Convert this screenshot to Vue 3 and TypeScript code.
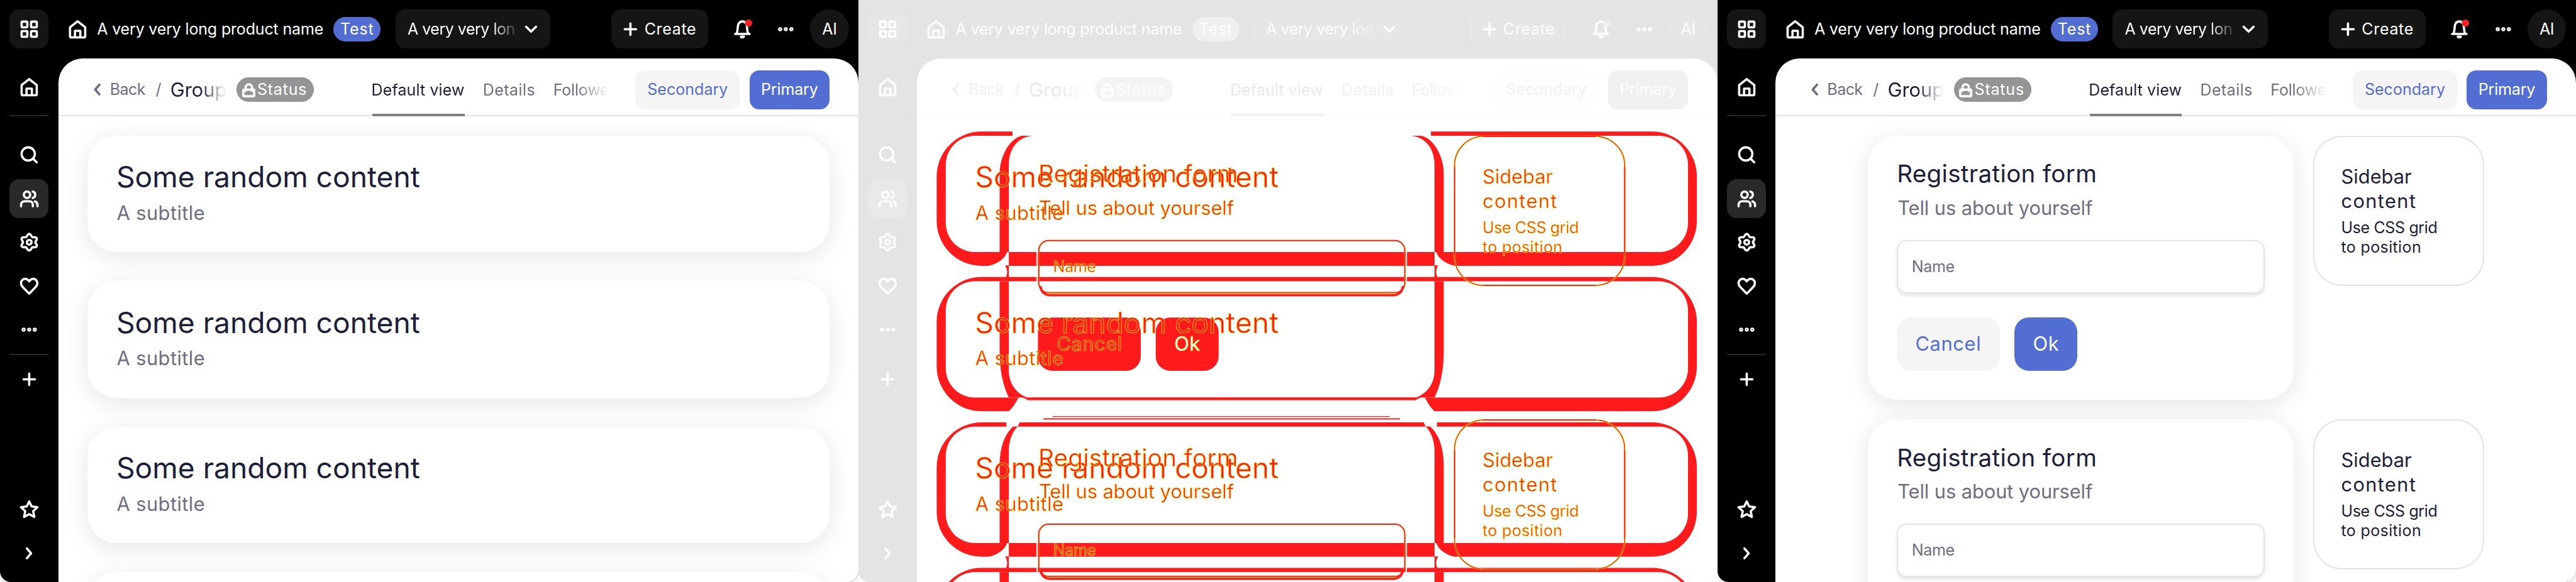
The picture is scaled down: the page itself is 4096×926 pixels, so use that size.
<script setup lang="ts">
type Layer = 'list' | 'form'
interface Panel { id: string; diff: boolean; layers: Layer[] }

const panels: Panel[] = [
  { id: 'before', diff: false, layers: ['list'] },
  { id: 'diff', diff: true, layers: ['list', 'form'] },
  { id: 'after', diff: false, layers: ['form'] },
]

const ring = (cx: number, cy: number, r: number) =>
  `M${cx - r} ${cy}a${r} ${r} 0 1 0 ${2 * r} 0a${r} ${r} 0 1 0 ${-2 * r} 0z`

const box = (x: number, y: number, w: number, h: number, r: number) =>
  `M${x + r} ${y}h${w - 2 * r}a${r} ${r} 0 0 1 ${r} ${r}v${h - 2 * r}a${r} ${r} 0 0 1 ${-r} ${r}h${2 * r - w}a${r} ${r} 0 0 1 ${-r} ${-r}v${2 * r - h}a${r} ${r} 0 0 1 ${r} ${-r}z`

const gearOutline = () => {
  const pts: string[] = []
  for (let i = 0; i < 72; i++) {
    const t = (i / 72) * Math.PI * 2
    const r = 5.85 + 0.95 * Math.cos(6 * t)
    pts.push(`${(8 + r * 1.04 * Math.sin(t)).toFixed(2)} ${(8 - r * Math.cos(t)).toFixed(2)}`)
  }
  return `M${pts.join('L')}z`
}

const icons: Record<string, string> = {
  apps: box(1.75, 1.75, 4.7, 4.7, 0.6) + box(9.55, 1.75, 4.7, 4.7, 0.6) + box(1.75, 9.55, 4.7, 4.7, 0.6) + box(9.55, 9.55, 4.7, 4.7, 0.6),
  home: 'M8 1.5L1.75 6.4V13.7a1.1 1.1 0 0 0 1.1 1.1H13.15a1.1 1.1 0 0 0 1.1-1.1V6.4ZM5.8 14.5V9.3H10.2V14.5',
  search: ring(7.2, 7.2, 5.45) + 'M11.2 11.2L14.2 14.1',
  users: ring(6.2, 4.6, 2.65) + 'M10.9 1.95a2.72 2.72 0 0 1 0 5.3M1.3 14.1V12.8a2.8 2.8 0 0 1 2.8-2.8H8.2a2.8 2.8 0 0 1 2.8 2.8V14.1M14.8 14.1V12.8a2.8 2.8 0 0 0-2.1-2.7',
  gear: gearOutline() + ring(8, 8, 1.95),
  heart: 'M8 14.1L2.7 8.7C.9 6.8 .8 4.3 2.3 2.9C4 1.3 6.5 1.6 8 3.9C9.5 1.6 12 1.3 13.7 2.9C15.2 4.3 15.1 6.8 13.3 8.7Z',
  plus: 'M8 3.3V12.7M3.3 8H12.7',
  star: 'M8 1.5L10 5.6L14.8 6.2L11.3 9.5L12.2 14.2L8 11.9L3.8 14.2L4.7 9.5L1.2 6.2L6 5.6Z',
  right: 'M6.1 4L9.6 8L6.1 12',
  left: 'M9.9 4L6.4 8L9.9 12',
  down: 'M3.9 6L8 10L12.1 6',
  bell: 'M2 11.9H14M3.2 11.6C4.4 9.6 3.8 5.6 4.9 3.4a3.6 3.6 0 0 1 6.2 0C12.2 5.6 11.6 9.6 12.8 11.6M6.7 14.1a1.35 1 0 0 0 2.6 0z',
  lock: 'M2.9 7.5V4.7a2.6 2.6 0 0 1 5.2 0V7.5' + box(1, 6.6, 9, 5.4, 0.6),
}
const dots = ring(3.4, 8, 1.05) + ring(8, 8, 1.05) + ring(12.6, 8, 1.05)

const navTop = ['search', 'users', 'gear', 'heart']

// Changed pixels around each list card: its shadow outline minus its body.
const cardRing = (top: number) => box(64.5, top - 3.5, 626.8, 110.8, 37) + box(72, top, 612, 96, 24)
const rings = [112, 232, 352, 472].map(cardRing)

const formEdge = [
  'M143.5 112C132 113 124 122 124 136V208H116.4V142C117 128 125 114 135 112Z',
  'M116.4 232V290C116.4 305 119 318 124 328H139.5C130 325 124 316 124 306V232Z',
  'M127.5 352C121 358 116.4 368 116.4 385V448H124V372C124 362 128 355 131.3 352Z',
  'M116.4 472H124V481H116.4Z',
  'M121 219Q124 224 121.5 229H124V219Z',
  'M121 459Q124 464 121.5 469H124V459Z',
]
const formGaps = [
  'M124 208V219.6H106C115 218 121 213 122.5 208Z',
  'M124 448V459.6H106C115 458 121 453 122.5 448Z',
  'M132.5 327C129 334 126 338 123 340H300V330H140Z',
  'M122 348.3H133L131.3 352H122Z',
  'M127 108H300V112H127Z',
]
const fields = [198, 432]
const asides = [112, 346]
</script>

<template>
  <div class="stage">
    <div v-for="p in panels" :key="p.id" class="panel">
      <div class="screen" :class="{ faded: p.diff }">
        <header class="topbar">
          <span class="apps"><svg class="ic" viewBox="0 0 16 16"><path :d="icons.apps" /></svg></span>
          <svg class="ic home" viewBox="0 0 16 16"><path :d="icons.home" /></svg>
          <span class="product">A very very long product name</span>
          <span class="badge test">Test</span>
          <span class="select">
            <span class="select-text">A very very lon</span>
            <svg class="ic" viewBox="0 0 16 16"><path :d="icons.down" /></svg>
          </span>
          <span class="create">
            <svg class="ic" viewBox="0 0 16 16"><path :d="icons.plus" /></svg>
            <span>Create</span>
          </span>
          <span class="tool bell">
            <svg class="ic" viewBox="0 0 16 16"><path :d="icons.bell" /><circle class="alert" cx="13.1" cy="3" r="3" /></svg>
          </span>
          <span class="tool"><svg class="ic dots" viewBox="0 0 16 16"><path :d="dots" /></svg></span>
          <span class="avatar">AI</span>
        </header>
        <div class="body">
          <nav class="rail">
            <span class="nav"><svg class="ic" viewBox="0 0 16 16"><path :d="icons.home" /></svg></span>
            <i class="sep first"></i>
            <span v-for="n in navTop" :key="n" class="nav" :class="{ active: n === 'users' }">
              <svg class="ic" viewBox="0 0 16 16"><path :d="icons[n]" /></svg>
            </span>
            <span class="nav"><svg class="ic dots" viewBox="0 0 16 16"><path :d="dots" /></svg></span>
            <i class="sep"></i>
            <span class="nav"><svg class="ic" viewBox="0 0 16 16"><path :d="icons.plus" /></svg></span>
            <span class="nav bottom"><svg class="ic" viewBox="0 0 16 16"><path :d="icons.star" /></svg></span>
            <span class="nav"><svg class="ic" viewBox="0 0 16 16"><path :d="icons.right" /></svg></span>
          </nav>
          <main class="main">
            <div class="subhead">
              <svg class="ic back-ic" viewBox="0 0 16 16"><path :d="icons.left" /></svg>
              <span class="back">Back</span>
              <span class="slash">/</span>
              <span class="group">Group</span>
              <span class="badge status">
                <svg class="lock" viewBox="0 0 11 13"><path :d="icons.lock" /></svg>
                <span>Status</span>
              </span>
              <div class="tabs">
                <span class="tab on"><b>Default view</b></span>
                <span class="tab details">Details</span>
                <span class="tab follow">Followe</span>
              </div>
              <span class="btn secondary">Secondary</span>
              <span class="btn primary">Primary</span>
            </div>
            <template v-if="!p.diff">
              <div v-for="l in p.layers" :key="l" class="content">
                <div v-if="l === 'list'" class="list">
                  <section class="card item" v-for="n in 3" :key="n">
                    <h2>Some random content</h2>
                    <p>A subtitle</p>
                  </section>
                  <section class="card item"></section>
                </div>
                <div v-else class="forms">
                  <template v-for="n in 2" :key="n">
                    <section class="card form">
                      <h3>Registration form</h3>
                      <p>Tell us about yourself</p>
                      <div class="field">Name</div>
                      <div v-if="n === 1" class="actions"><span class="cancel">Cancel</span><span class="ok">Ok</span></div>
                    </section>
                    <aside class="aside">
                      <h4><span class="w1">Sidebar</span><br /><span class="w2">content</span></h4>
                      <p><span class="w3">Use CSS grid</span><br /><span class="w4">to position</span></p>
                    </aside>
                  </template>
                </div>
              </div>
            </template>
          </main>
        </div>
      </div>

      <div v-if="p.diff" class="overlay">
        <svg class="shapes" viewBox="0 0 708 480">
          <path v-for="(d, i) in rings" :key="'r' + i" :d="d" fill="#f00" fill-rule="evenodd" />
          <g v-for="side in ['', 'translate(599 0) scale(-1 1)']" :key="side" :transform="side">
            <path v-for="(d, i) in formGaps" :key="'g' + i" :d="d" fill="#fff" />
            <path v-for="(d, i) in formEdge" :key="'e' + i" :d="d" fill="#f00" />
          </g>
          <path d="M139 328H460V330H139ZM160 343.3H438V343.9H160ZM152.5 345.1H446.5V346.1H152.5Z" fill="#f00" />
          <g v-for="y in fields" :key="'f' + y" fill="none">
            <path :d="box(147.2, y, 304.6, 46.5, 9)" stroke="#fff" stroke-width="1" />
            <path :d="box(148.7, y + 0.5, 301.8, 43, 8)" stroke="#ff0" stroke-width="1.2" />
            <path :d="box(148.7, y + 0.5, 301.8, 43, 8)" stroke="#f00" />
            <path :d="`M150 ${y + 38}Q151 ${y + 45} 158 ${y + 45.5}H441Q448 ${y + 45} 449 ${y + 38}`" stroke="#f00" stroke-width="2" />
            <path :d="`M155 ${y + 44.2}H444`" stroke="#ff0" stroke-width=".4" />
          </g>
          <path :d="box(148, 262, 84.8, 44, 12) + box(245.1, 262, 51.9, 44, 12)" fill="#f00" />
          <g v-for="y in asides" :key="'a' + y" fill="none">
            <path :d="box(491.5, y + 0.5, 140.3, 123, 24)" stroke="#ff0" stroke-width="1.3" />
            <path :d="box(491.5, y + 0.5, 140.3, 123, 24)" stroke="#f00" stroke-width=".7" />
            <path :d="`M515 ${y + 0.5}H608M515 ${y + 123.5}H608M491.5 ${y + 26}V${y + 98}M631.8 ${y + 26}V${y + 98}`" stroke="#f00" />
          </g>
        </svg>
        <div v-for="l in p.layers" :key="l" class="content ghost">
          <div v-if="l === 'list'" class="list">
            <section v-for="n in 3" :key="n" class="card item">
              <h2>Some random content</h2>
              <p>A subtitle</p>
            </section>
          </div>
          <div v-else class="forms">
            <template v-for="n in 2" :key="n">
              <section class="card form">
                <h3>Registration form</h3>
                <p>Tell us about yourself</p>
                <div class="field">Name</div>
                <div v-if="n === 1" class="actions"><span class="cancel">Cancel</span><span class="ok">Ok</span></div>
              </section>
              <aside class="aside">
                <h4><span class="w1">Sidebar</span><br /><span class="w2">content</span></h4>
                <p><span class="w3">Use CSS grid</span><br /><span class="w4">to position</span></p>
              </aside>
            </template>
          </div>
        </div>
      </div>
    </div>
  </div>
</template>

<style>
body { overflow: hidden; background: #fff; }
</style>

<style scoped>
.stage {
  zoom: 1.928437;
  display: flex;
  width: 2124px;
  height: 480.3px;
  overflow: hidden;
  font: 400 13px/20px Inter, sans-serif;
  color: #1b1f3b;
}
.stage * { box-sizing: border-box; }
.panel {
  display: grid;
  grid-template: 480.3px / 708px;
  width: 708px;
  height: 480.3px;
  overflow: hidden;
  background: #fff;
}
.screen, .overlay { grid-area: 1 / 1; min-width: 0; overflow: hidden; }
.screen {
  display: flex;
  flex-direction: column;
  background: #000;
  border-radius: 0 0 9px 9px;
  box-shadow: 0 4px 20px rgba(0, 0, 0, .1);
}
.faded { filter: grayscale(1) opacity(.105); box-shadow: none; }

.ic { width: 16px; height: 16px; flex: none; overflow: visible; fill: none; stroke: currentColor; stroke-width: 1.85; stroke-linecap: round; stroke-linejoin: round; }
.ic.dots { stroke-width: 1.3; }
.alert { fill: #fa2222; stroke: none; }

.topbar { display: flex; align-items: center; height: 48px; flex: none; padding: 0 8px; color: #fff; white-space: nowrap; }
.apps, .create, .avatar, .tool, .select { display: flex; align-items: center; height: 32px; flex: none; border-radius: 8px; }
.apps, .create, .avatar, .select { background: #151515; }
.apps { width: 32px; justify-content: center; }
.home { margin-left: 16px; }
.product { margin-left: 8px; width: 195px; flex: none; letter-spacing: -.098px; }
.badge { display: flex; align-items: center; height: 20px; flex: none; border-radius: 10px; color: #fff; }
.test { width: 39px; justify-content: center; background: #526ed3; letter-spacing: .44px; }
.select { margin-left: 12px; width: 128px; padding-left: 10px; }
.select-text { width: 94px; letter-spacing: -.26px; -webkit-mask-image: linear-gradient(90deg, #000 70px, transparent 92px); mask-image: linear-gradient(90deg, #000 70px, transparent 92px); }
.create { margin-left: 50px; width: 80px; padding-left: 8px; letter-spacing: .33px; }
.create span { margin-left: 3.4px; }
.tool { width: 32px; justify-content: center; }
.bell { margin: 0 4px 0 12px; }
.avatar { margin-left: 4px; width: 32px; justify-content: center; border-radius: 50%; letter-spacing: -.2px; }

.body { display: flex; flex: 1; min-height: 0; }
.rail { display: flex; flex-direction: column; align-items: center; width: 48px; flex: none; padding: 8px 0; color: #fff; }
.nav { display: flex; align-items: center; justify-content: center; width: 32px; height: 32px; flex: none; border-radius: 8px; margin-bottom: 4px; }
.nav.active { background: #292929; }
.nav.bottom { margin-top: auto; }
.nav:last-child { margin-bottom: 0; }
.sep { width: 32px; height: 1.04px; flex: none; margin-bottom: 4px; background: #292929; }
.sep.first { margin: 3px 0 16px; }

.main { flex: 1; min-width: 0; overflow: hidden; background: #fff; border-radius: 20px 20px 0 0; }
.subhead { display: flex; align-items: center; height: 48px; padding: 4px 24px 0; border-bottom: 1.04px solid #e4e4e4; white-space: nowrap; }
.back-ic { stroke-width: 1.9; color: #6c6e81; margin-top: 1px; }
.subhead > span, .tabs { margin-top: 1px; }
.back { margin-left: 2.6px; width: 37.8px; flex: none; color: #6c6e81; letter-spacing: -.3px; }
.slash { width: 12px; flex: none; color: #6c6e81; }
.group { width: 47px; flex: none; font-size: 16px; line-height: 24px; -webkit-mask-image: linear-gradient(90deg, #000 24px, transparent 46px); mask-image: linear-gradient(90deg, #000 24px, transparent 46px); }
.status { margin-left: 7.6px; width: 64px; padding-left: 4.5px; background: #959595; letter-spacing: .4px; }
.lock { width: 11px; height: 13px; flex: none; margin-right: 1.6px; fill: none; stroke: currentColor; stroke-width: 1.95; stroke-linecap: round; stroke-linejoin: round; }
.tabs { display: flex; align-self: stretch; width: 196px; flex: none; margin: -4px 0 -1.04px 48px; padding-top: 4px; color: #6c6e81; -webkit-mask-image: linear-gradient(90deg, #000 168px, transparent 195px); mask-image: linear-gradient(90deg, #000 168px, transparent 195px); }
.tab { display: flex; align-items: center; flex: none; letter-spacing: .22px; padding-top: 1px; }
.tab.on { width: 76px; margin-top: -4px; padding-top: 5px; color: #1b1f3b; letter-spacing: .045px; box-shadow: inset 0 -2.1px #808080; }
.tab b { font-weight: 400; margin-left: -.7px; }
.details { width: 58px; margin-left: 15.2px; }
.follow { letter-spacing: -.1px; }
.btn { display: flex; align-items: center; justify-content: center; height: 32px; flex: none; border-radius: 8px; }
.secondary { width: 86px; margin-left: 21px; background: #f5f5f5; color: #526ed3; }
.primary { width: 66px; margin-left: 8px; background: #526ed3; color: #fff; letter-spacing: -.09px; }

.content { padding: 16px 24px 0; }
.list { display: flex; flex-direction: column; gap: 24px; }
.card { border-radius: 24px; background: #fff; box-shadow: 0 4px 20px rgba(0, 0, 0, .1); padding: 0 24px; }
h2, h3, h4, p { margin: 0; font-weight: 400; white-space: nowrap; }
.item { height: 96px; padding-top: 19.9px; }
h2 { font-size: 24px; line-height: 28px; margin-left: -.1px; letter-spacing: -.026px; }
.card p { font-size: 16px; line-height: 20px; color: #6c6e81; }
.item p { margin: 6px 0 0 .2px; letter-spacing: .21px; }
.forms { display: grid; grid-template-columns: 351.2px 141px; column-gap: 15.9px; row-gap: 16px; padding-left: 52px; align-items: start; }
.form { height: 218px; padding-top: 19.4px; }
h3 { font-size: 20px; line-height: 24px; margin-left: .1px; letter-spacing: .164px; }
.form p { margin: 6.5px 0 0 .6px; letter-spacing: -.05px; }
.field { height: 44px; margin-top: 16.1px; padding: 11px 11.3px 0; border: 1.04px solid #e4e4e4; border-radius: 8px; color: #6c6e81; letter-spacing: -.19px; box-shadow: 0 2px 3px rgba(0, 0, 0, .1); }
.actions { display: flex; gap: 12.3px; margin-top: 20px; font-size: 16px; }
.cancel, .ok { display: flex; align-items: center; justify-content: center; height: 44px; border-radius: 12px; }
.cancel { width: 84.8px; background: #f5f5f5; color: #526ed3; letter-spacing: .32px; }
.ok { width: 51.9px; background: #526ed3; color: #fff; letter-spacing: .3px; }
.aside { height: 124px; padding: 22.9px 0 0 22.2px; border: 1.04px solid #e4e4e4; border-radius: 24px; }
h4 { font-size: 16px; line-height: 20px; }
.w2 { letter-spacing: .7px; }
.w3 { letter-spacing: -.2px; }
.w4 { letter-spacing: .18px; }
.aside p { margin-top: 4.1px; line-height: 16px; }

.overlay { display: grid; grid-template: 480px / 708px; overflow: hidden; }
.overlay > * { grid-area: 1 / 1; }
.shapes { width: 708px; height: 480px; }
.ghost { padding: 112px 24px 0 72px; overflow: hidden; height: 480px; color: #f00; -webkit-text-stroke: .32px #ff0; }
.ghost .card, .ghost .field { background: none; box-shadow: none; border-color: transparent; }
.ghost .aside { border-color: transparent; }
.ghost .card p, .ghost .field, .ghost .cancel { color: #f00; background: none; }
.ghost .ok { color: #fff; background: none; }
</style>
